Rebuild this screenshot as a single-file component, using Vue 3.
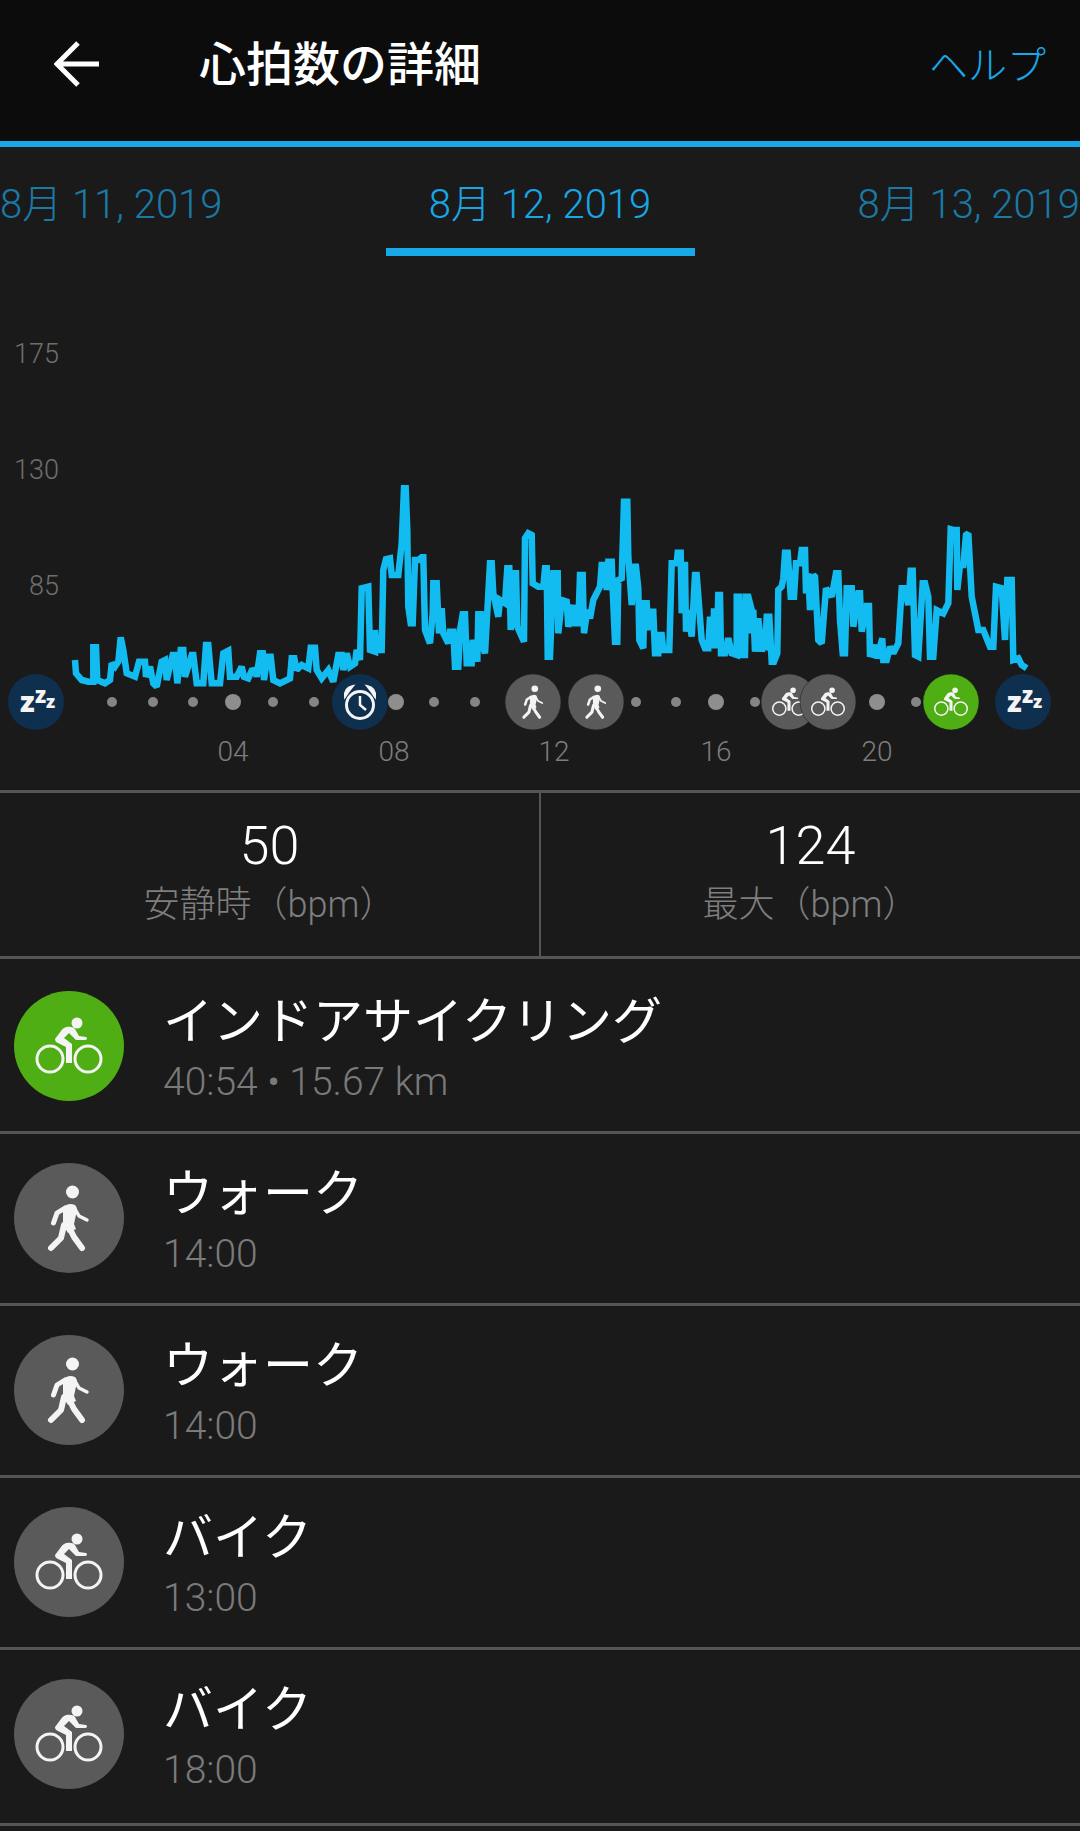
<script setup>
// heart rate trace, read off the chart in 3 sections: [left edge, x,y,x,y...] (3x coordinates)
const sections = [
  [60, 45,540,48,580,65,600,85,605,100,605,100,502,108,502,112,600,135,610,150,600,155,550,165,560,175,545,182,472,190,510,200,580,225,590,237,545,255,545,258,590,270,560,280,610,290,620,305,545,315,540,320,600,338,525,345,525,352,610,362,510,370,510,375,590,395,525,400,525,410,610,430,610,438,495,445,495,455,610,480,610,490,520,505,512,510,590,530,590,545,560,552,590,565,595,575,572,585,570,590,590,600,520,608,520,612,600,622,530,632,530,640,600,660,610,690,595,695,535,703,535,710,570,725,555,745,565,752,503,765,503,770,570,785,595,805,570,815,595,820,605,835,525,845,525,850,570,860,520,870,560,885,550,890,510,900,540,905,325,925,320,930,510,945,515,945,450,950,510,965,510,970,270,978,238],
  [390, 0,235,5,285,25,285,35,190,42,25,47,25,52,150,55,380,62,430,68,430,75,240,85,240,95,232,100,232,105,450,120,490,128,400,130,310,140,310,147,460,155,385,160,460,175,490,180,455,190,455,195,560,205,560,210,450,218,403,225,403,230,550,245,550,248,480,262,545,265,403,272,403,275,490,285,520,300,250,305,250,310,340,325,410,330,360,345,370,352,265,358,265,362,450,372,280,378,280,382,440,402,485,405,175,415,160,425,165,428,310,445,320,460,320,465,265,470,265,473,530,480,530,490,280,503,280,505,460,515,360,530,365,535,440,550,375,555,430,565,430,570,285,578,285,582,460,592,390,600,415,610,360,630,320,635,255,645,255,650,330,655,245,665,245,668,330,675,485,682,485,685,300,695,295,702,65,712,65,715,230,725,375,732,260,738,260,745,325,748,480,760,505,763,370,770,370,775,450,782,395,790,395,795,520,805,520,808,465,815,465,820,510,838,510,845,250,860,250,863,218,872,218,875,400,880,255,885,255,888,455,895,390,905,470,915,285,920,285,935,480,945,505,955,505,960,410,970,505,972,385,980,505,985,345],
  [720, 0,345,3,520,15,520,25,475,35,520,50,525,50,350,58,350,62,525,75,525,78,350,85,350,95,390,95,460,100,390,105,515,115,415,125,515,130,480,135,510,140,410,148,410,155,545,162,545,172,520,175,330,185,320,190,295,195,218,203,218,212,350,222,350,228,250,240,250,245,210,255,210,258,340,265,280,270,390,280,285,285,290,295,480,305,490,318,325,335,350,348,280,355,280,360,420,368,520,375,520,380,325,395,325,400,440,415,340,420,340,425,455,440,378,447,378,450,530,465,495,470,535,480,500,487,475,490,540,500,540,510,500,520,520,535,490,545,325,555,325,565,375,572,272,578,272,585,525,595,530,608,310,615,310,625,350,630,530,640,530,650,390,670,400,685,370,692,148,700,150,710,150,712,330,720,255,730,255,738,165,745,160,755,350,775,450,790,450,810,500,820,500,828,320,845,325,855,480,862,300,875,300,880,540,895,535,905,555,920,565],
]

const pts = []
for (const [base, ...v] of sections) {
  for (let i = 0; i < v.length; i += 2) {
    pts.push(`${(base + v[i] / 3).toFixed(1)},${(480 + v[i + 1] / 3).toFixed(1)}`)
  }
}
const trace = pts.join(' ')

const smallDots = [112, 153, 193, 273, 314, 434, 475, 636, 676, 755, 916]
const bigDots = [233, 396, 716, 877]
const hours = [
  { x: 233, t: '04' },
  { x: 394, t: '08' },
  { x: 554, t: '12' },
  { x: 716, t: '16' },
  { x: 877, t: '20' },
]
const axis = [
  { y: 363, t: '175' },
  { y: 479, t: '130' },
  { y: 595, t: '85' },
]
const badges = [
  { x: 533, fill: '#5a5a5a', icon: '#walk' },
  { x: 596, fill: '#5a5a5a', icon: '#walk' },
  { x: 789, fill: '#5a5a5a', icon: '#bike' },
  { x: 828, fill: '#5a5a5a', icon: '#bike' },
  { x: 951, fill: '#4fae14', icon: '#bike' },
]

const activities = [
  { name: 'インドアサイクリング', sub: '40:54 • 15.67 km', icon: '#bike', green: true },
  { name: 'ウォーク', sub: '14:00', icon: '#walk' },
  { name: 'ウォーク', sub: '14:00', icon: '#walk' },
  { name: 'バイク', sub: '13:00', icon: '#bike' },
  { name: 'バイク', sub: '18:00', icon: '#bike' },
]
</script>

<template>
  <div class="page">
    <svg class="defs" width="0" height="0">
      <symbol id="bike" viewBox="0 0 110 110">
        <circle cx="36" cy="68" r="13" fill="none" stroke="#f4f4f4" stroke-width="3" />
        <circle cx="74" cy="68" r="13" fill="none" stroke="#f4f4f4" stroke-width="3" />
        <circle cx="63" cy="32" r="5.5" fill="#f4f4f4" />
        <path
          fill="#f4f4f4"
          d="M57 36 C52 35 49 37 47 40 L41 48 C41 50 42 51 44 52 L52 56 L52 72 L58 72 L58 53 L50 47 L55 42 L60 47 Q61 49 63 49 L72 49 Q74 47 72 46 L65 45 L61 38 Q60 36 57 36 Z"
        />
      </symbol>
      <symbol id="walk" viewBox="0 0 110 110">
        <circle cx="58.5" cy="29" r="6.5" fill="#f4f4f4" />
        <path fill="#f4f4f4" d="M49 46 Q51 41 57 41 Q63 41 63 47 L60 61 L62 66 L54 70 L49 62 Z" />
        <g fill="none" stroke="#f4f4f4" stroke-linecap="round" stroke-linejoin="round">
          <path stroke-width="5" d="M51 45 L43 50 L39.5 60" />
          <path stroke-width="3.5" d="M61 46 L65 53 L73 57" />
          <path stroke-width="6" d="M50 62 L47 75 L37 85" />
          <path stroke-width="6" d="M55 64 L60 74 L68 85" />
        </g>
      </symbol>
    </svg>

    <header class="topbar">
      <svg class="back" width="46" height="46" viewBox="0 0 46 46">
        <path d="M45 23 H5 M24 2 L3 23 L24 44" fill="none" stroke="#fff" stroke-width="5" />
      </svg>
      <h1 class="topbar__title">心拍数の詳細</h1>
      <span class="topbar__help">ヘルプ</span>
    </header>

    <nav class="dates">
      <span class="dates__item">8月 11, 2019</span>
      <span class="dates__item dates__item--active">8月 12, 2019</span>
      <span class="dates__item">8月 13, 2019</span>
    </nav>

    <section class="chart">
      <svg width="1080" height="535" viewBox="0 256 1080 535">
        <text v-for="a in axis" :key="a.t" class="chart__axis" x="59" :y="a.y" text-anchor="end">{{ a.t }}</text>
        <polyline
          :points="trace"
          fill="none"
          stroke="#12bcf0"
          stroke-width="6.5"
          stroke-linejoin="miter"
          stroke-miterlimit="2"
        />
        <circle v-for="x in smallDots" :key="x" :cx="x" cy="702" r="5" fill="#858585" />
        <circle v-for="x in bigDots" :key="x" :cx="x" cy="702" r="8" fill="#8e8e8e" />

        <circle cx="36" cy="702" r="28" fill="#0e2f4e" />
        <text class="chart__z" x="20" y="712" font-size="29">z</text>
        <text class="chart__z" x="35" y="703" font-size="22">z</text>
        <text class="chart__z" x="46" y="708" font-size="18">z</text>

        <circle cx="360" cy="702" r="28" fill="#0e2f4e" />
        <g fill="none" stroke="#f4f4f4" stroke-width="3">
          <circle cx="360" cy="705" r="13.5" />
          <path d="M360 696 V705 L366 710" stroke-width="2.5" />
        </g>
        <path d="M345 697 Q344 688 353 686 Q349 691 345 697 Z M375 697 Q376 688 367 686 Q371 691 375 697 Z" fill="#f4f4f4" stroke="#f4f4f4" stroke-width="2" />

        <template v-for="b in badges" :key="b.x">
          <circle :cx="b.x" cy="702" r="28" :fill="b.fill" stroke="#1a1a1a" stroke-opacity="0.5" />
          <use :href="b.icon" :x="b.x - 28" y="674" width="56" height="56" />
        </template>

        <circle cx="1023" cy="702" r="28" fill="#0e2f4e" />
        <text class="chart__z" x="1007" y="712" font-size="29">z</text>
        <text class="chart__z" x="1022" y="703" font-size="22">z</text>
        <text class="chart__z" x="1033" y="708" font-size="18">z</text>

        <text v-for="h in hours" :key="h.t" class="chart__hour" :x="h.x" y="761" text-anchor="middle">{{ h.t }}</text>
      </svg>
    </section>

    <section class="stats">
      <div class="stats__cell stats__cell--left">
        <div class="stats__value">50</div>
        <div class="stats__label">安静時（bpm）</div>
      </div>
      <div class="stats__cell stats__cell--right">
        <div class="stats__value">124</div>
        <div class="stats__label">最大（bpm）</div>
      </div>
    </section>

    <ul class="list">
      <li v-for="(a, i) in activities" :key="i" class="list__row">
        <svg class="list__icon" :class="{ 'list__icon--green': a.green }" width="110" height="110" viewBox="0 0 110 110">
          <use :href="a.icon" width="110" height="110" />
        </svg>
        <div class="list__text">
          <div class="list__name">{{ a.name }}</div>
          <div class="list__sub">{{ a.sub }}</div>
        </div>
      </li>
    </ul>
  </div>
</template>

<style>
html,
body {
  background: #1a1a1a;
}
</style>

<style scoped>
.page {
  width: 1080px;
  height: 1831px;
  overflow: hidden;
  background: #1a1a1a;
  font-family: Roboto, 'Noto Sans CJK JP', sans-serif;
}
.defs {
  position: absolute;
}
.topbar {
  display: flex;
  align-items: center;
  height: 128px;
  padding: 0 34px 13px 54px;
  background: #0c0c0c;
  border-bottom: 6px solid #17a8e8;
}
.topbar__title {
  margin: 0 0 0 99px;
  color: #fff;
  font-size: 47px;
  font-weight: 500;
  line-height: 1;
}
.topbar__help {
  margin: 0 0 4px auto;
  color: #18a7e8;
  font-size: 39px;
  font-weight: 300;
}
.dates {
  display: flex;
  justify-content: space-between;
  height: 109px;
}
.dates__item {
  display: flex;
  justify-content: center;
  align-items: center;
  box-sizing: border-box;
  height: 109px;
  padding-top: 6px;
  border-bottom: 8px solid transparent;
  color: #1b79a6;
  font-size: 40px;
  font-weight: 300;
  white-space: nowrap;
}
.dates__item--active {
  width: 309px;
  color: #18a6e6;
  border-bottom-color: #17a8e8;
}
.chart {
  height: 534px;
}
.chart svg {
  display: block;
}
.chart__axis {
  fill: #6e6e6e;
  font-size: 27px;
  font-weight: 300;
}
.chart__hour {
  fill: #7d7d7d;
  font-size: 28px;
  font-weight: 300;
}
.chart__z {
  fill: #f4f4f4;
  font-family: 'Open Sans', sans-serif;
  font-weight: 800;
}
.stats {
  display: flex;
  height: 163px;
  border-top: 3px solid #555;
  border-bottom: 3px solid #555;
}
.stats__cell {
  flex: 1;
  display: flex;
  flex-direction: column;
  align-items: center;
  padding-top: 22px;
  box-sizing: border-box;
}
.stats__cell--left {
  flex: none;
  width: 539px;
}
.stats__cell--right {
  border-left: 2px solid #555;
}
.stats__value {
  color: #fff;
  font-size: 54px;
  font-weight: 300;
  line-height: 62px;
}
.stats__label {
  color: #7f7f7f;
  font-size: 36px;
  font-weight: 300;
  line-height: 50px;
  margin-top: 3px;
}
.list {
  margin: 0;
  padding: 3px 0 0;
  list-style: none;
}
.list__row {
  display: flex;
  align-items: center;
  gap: 39px;
  height: 172px;
  padding: 0 0 2px 14px;
  box-sizing: border-box;
  border-bottom: 3px solid #555;
}
.list__row:last-child {
  height: 176px;
  padding-bottom: 6px;
}
.list__icon {
  flex: none;
  border-radius: 50%;
  background: #5a5a5a;
}
.list__icon--green {
  background: #4fae14;
}
.list__text {
  padding-top: 8px;
}
.list__name {
  color: #fff;
  font-size: 50px;
  line-height: 60px;
}
.list__sub {
  color: #7a7a7a;
  font-size: 39px;
  font-weight: 300;
  line-height: 50px;
  margin-top: 5px;
}
</style>
